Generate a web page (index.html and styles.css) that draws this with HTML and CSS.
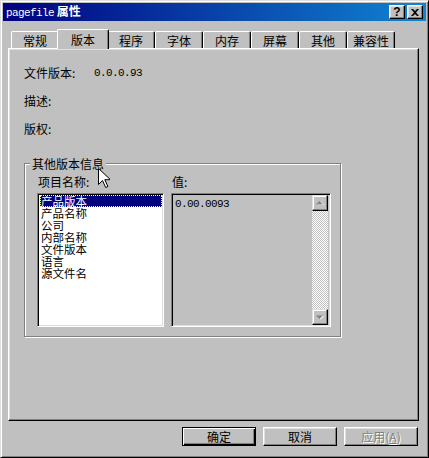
FILE: index.html
```html
<!DOCTYPE html>
<html lang="zh-cn">
<head>
    <meta charset="UTF-8">
    <title>pagefile 属性</title>
    <link rel="stylesheet" href="styles.css">
</head>
<body>
    <div class="window">
        <div class="titlebar">
            <span class="title"><span class="latin">pagefile</span> 属性</span>
            <div class="cap-buttons">
                <div class="cap-btn help">?</div>
                <div class="cap-btn">
                    <svg width="8" height="7" viewBox="0 0 8 7"><path d="M0 0h2l2 2 2-2h2L5 3.5 8 7H6L4 5 2 7H0l3-3.5z" fill="#000"/></svg>
                </div>
            </div>
        </div>

        <div class="dialog">
            <div class="tabs">
                <div class="tab">常规</div>
                <div class="tab active">版本</div>
                <div class="tab">程序</div>
                <div class="tab">字体</div>
                <div class="tab">内存</div>
                <div class="tab">屏幕</div>
                <div class="tab">其他</div>
                <div class="tab">兼容性</div>
            </div>

            <div class="panel">
                <div class="info-row">
                    <span class="info-label">文件版本:</span>
                    <span class="mono">0.0.0.93</span>
                </div>
                <div class="info-row">
                    <span class="info-label">描述:</span>
                </div>
                <div class="info-row">
                    <span class="info-label">版权:</span>
                </div>

                <div class="group">
                    <span class="group-title">其他版本信息</span>
                    <div class="group-cols">
                        <div class="col">
                            <div class="col-label">项目名称:</div>
                            <div class="listbox">
                                <div class="item selected">产品版本</div>
                                <div class="item">产品名称</div>
                                <div class="item">公司</div>
                                <div class="item">内部名称</div>
                                <div class="item">文件版本</div>
                                <div class="item">语言</div>
                                <div class="item">源文件名</div>
                            </div>
                        </div>
                        <div class="col">
                            <div class="col-label">值:</div>
                            <div class="valuebox">
                                <div class="value-text mono">0.00.0093</div>
                                <div class="scrollbar">
                                    <div class="scroll-btn">
                                        <svg width="8" height="5" viewBox="0 0 8 5"><path d="M1 4h7L4.5 0.5z" fill="#fff"/><path d="M0 3.5h7L3.5 0z" fill="#808080"/></svg>
                                    </div>
                                    <div class="track"></div>
                                    <div class="scroll-btn">
                                        <svg width="8" height="5" viewBox="0 0 8 5"><path d="M1 1h7L4.5 4.5z" fill="#fff"/><path d="M0 0.5h7L3.5 4z" fill="#808080"/></svg>
                                    </div>
                                </div>
                            </div>
                        </div>
                    </div>
                </div>
            </div>

            <div class="buttons">
                <div class="btn default">确定</div>
                <div class="btn">取消</div>
                <div class="btn disabled">应用(<u>A</u>)</div>
            </div>
        </div>

        <svg class="cursor" width="12" height="21" viewBox="0 0 12 21">
            <path d="M0.5 0.5v16l4-4 3.2 7 2.2-1-3.1-6.8h5.7z" fill="#fff" stroke="#000" stroke-width="1"/>
        </svg>
    </div>
</body>
</html>
```

FILE: styles.css
```css
* {
    box-sizing: border-box;
}
body {
    margin: 0;
    background: #c0c0c0;
}
.window {
    position: relative;
    width: 429px;
    height: 458px;
    padding: 2px;
    background: #c0c0c0;
    border: 1px solid;
    border-color: #dfdfdf #000 #000 #dfdfdf;
    box-shadow: inset 1px 1px #fff, inset -1px -1px #808080;
    font-family: "Noto Sans CJK SC", sans-serif;
    font-size: 12px;
    line-height: 12px;
    color: #000;
}
.titlebar {
    height: 18px;
    display: flex;
    align-items: center;
    justify-content: space-between;
    padding: 0 3px 0 3px;
    background: linear-gradient(to right, #000080, #1084d0);
    color: #fff;
    font-weight: bold;
}
.latin {
    font-family: "Liberation Mono", monospace;
    font-size: 11px;
    font-weight: normal;
    letter-spacing: -0.6px;
}
.cap-buttons {
    display: flex;
    gap: 2px;
}
.cap-btn {
    width: 16px;
    height: 14px;
    display: flex;
    align-items: center;
    justify-content: center;
    background: #c0c0c0;
    border: 1px solid;
    border-color: #fff #000 #000 #fff;
    box-shadow: inset -1px -1px #808080, inset 1px 1px #dfdfdf;
    color: #000;
}
.help {
    font-family: "Liberation Sans", sans-serif;
    font-size: 12px;
    font-weight: bold;
}
.dialog {
    padding: 0 7px 0 5px;
}
.tabs {
    position: relative;
    z-index: 1;
    display: flex;
    align-items: flex-end;
    height: 21px;
    margin-top: 7px;
    margin-bottom: -1px;
    padding-left: 3px;
}
.tab {
    width: 48px;
    height: 17px;
    margin-bottom: 1px;
    padding-top: 3px;
    text-align: center;
    background: #c0c0c0;
    border-top: 1px solid #fff;
    border-left: 1px solid #fff;
    border-right: 1px solid #000;
    border-radius: 2px 2px 0 0;
    box-shadow: inset -1px 0 #808080;
}
.tab.active {
    position: relative;
    width: 52px;
    height: 20px;
    margin: 0 -2px;
    padding-top: 4px;
}
.panel {
    display: flex;
    flex-direction: column;
    gap: 16px;
    height: 373px;
    padding: 18px 0 0 15px;
    border: 1px solid;
    border-color: #fff #000 #000 #fff;
    box-shadow: inset -1px -1px #808080, inset 1px 1px #dfdfdf;
}
.info-row {
    display: flex;
    height: 12px;
}
.info-label {
    width: 70px;
}
.mono {
    font-family: "Liberation Mono", monospace;
    font-size: 11px;
    letter-spacing: -0.6px;
}
.group {
    position: relative;
    width: 317px;
    height: 174px;
    margin-top: 12px;
    padding: 12px 0 0 12px;
    border: 1px solid #808080;
    box-shadow: 1px 1px #fff, inset 1px 1px #fff;
}
.group-title {
    position: absolute;
    top: -7px;
    left: 5px;
    padding: 0 2px;
    line-height: 13px;
    background: #c0c0c0;
}
.group-cols {
    display: flex;
    gap: 7px;
}
.col-label {
    height: 12px;
    margin-bottom: 5px;
    padding-left: 1px;
}
.listbox {
    width: 127px;
    height: 134px;
    padding: 1px;
    background: #fff;
    border: 1px solid;
    border-color: #808080 #fff #fff #808080;
    box-shadow: inset 1px 1px #000, inset -1px -1px #dfdfdf;
}
.item {
    height: 12px;
    margin-left: 1px;
    padding-left: 1px;
    font-size: 11.5px;
}
.item.selected {
    background: #000080;
    color: #fff;
    outline: 1px dotted #ffff9c;
    outline-offset: -1px;
}
.valuebox {
    display: flex;
    width: 160px;
    height: 134px;
    padding: 1px;
    background: #c0c0c0;
    border: 1px solid;
    border-color: #808080 #fff #fff #808080;
    box-shadow: inset 1px 1px #000, inset -1px -1px #dfdfdf;
}
.value-text {
    flex: 1;
    padding: 3px 0 0 2px;
}
.scrollbar {
    display: flex;
    flex-direction: column;
    width: 16px;
    margin-right: 1px;
}
.scroll-btn {
    height: 16px;
    display: flex;
    align-items: center;
    justify-content: center;
    background: #c0c0c0;
    border: 1px solid;
    border-color: #dfdfdf #000 #000 #dfdfdf;
    box-shadow: inset -1px -1px #808080, inset 1px 1px #fff;
}
.track {
    flex: 1;
    background: repeating-conic-gradient(#c0c0c0 0 25%, #fff 0 50%) 0 0 / 2px 2px;
}
.buttons {
    display: flex;
    justify-content: flex-end;
    gap: 7px;
    margin-top: 6px;
    padding-right: 1px;
}
.btn {
    width: 74px;
    height: 19px;
    display: flex;
    align-items: center;
    justify-content: center;
    background: #c0c0c0;
    border: 1px solid;
    border-color: #fff #000 #000 #fff;
    box-shadow: inset -1px -1px #808080, inset 1px 1px #dfdfdf;
}
.btn.default {
    border-color: #000;
    box-shadow: inset 1px 1px #fff, inset -1px -1px #000, inset -2px -2px #808080;
}
.btn.disabled {
    color: #808080;
    text-shadow: 1px 1px 0 #fff;
}
.cursor {
    position: absolute;
    left: 97px;
    top: 167px;
}
```
